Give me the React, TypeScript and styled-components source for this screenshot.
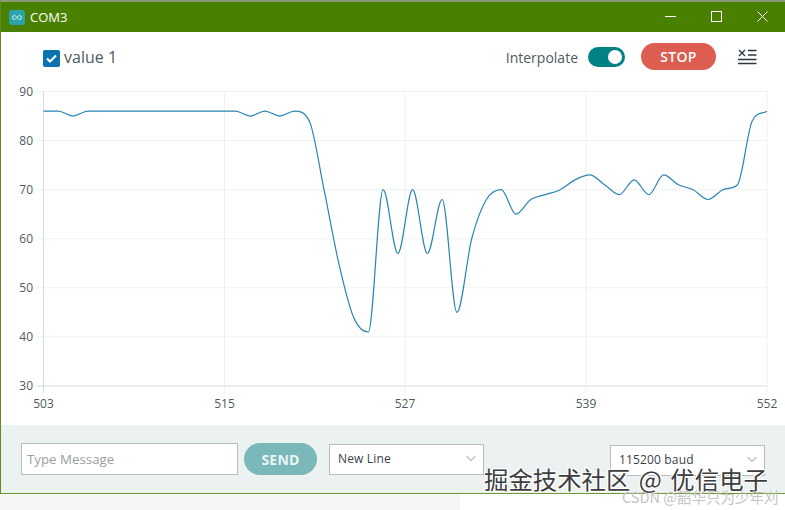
import { createGlobalStyle, styled } from "styled-components";

const GlobalStyle = createGlobalStyle`
    html, body {
        margin: 0;
        padding: 0;
        background: #fff;
    }
    body {
        font-family: "Open Sans", "Liberation Sans", sans-serif;
    }
`;

const Page = styled.div`
    position: relative;
    width: 785px;
    height: 510px;
    overflow: hidden;
    display: flex;
    flex-direction: column;
`;

const Window = styled.div`
    height: 494px;
    box-sizing: border-box;
    border-top: 2px solid #8d9a78;
    border-left: 1px solid #5c8c1c;
    border-bottom: 1px solid #6a9a2a;
    display: flex;
    flex-direction: column;
`;

const TitleBar = styled.div`
    height: 30px;
    flex-shrink: 0;
    background: #4a8000;
    display: flex;
    align-items: center;
    color: #fff;
    padding-left: 8px;
`;

const TitleText = styled.span`
    font-size: 13px;
    margin-left: 5px;
    flex: 1;
`;

const WinButton = styled.div`
    width: 46px;
    height: 28px;
    margin-bottom: 2px;
    display: flex;
    align-items: center;
    justify-content: center;
`;

const Toolbar = styled.div`
    height: 50px;
    flex-shrink: 0;
    background: #fff;
    display: flex;
    align-items: center;
    padding: 0 28px 0 42px;
`;

const CheckBox = styled.div`
    width: 17px;
    height: 17px;
    border-radius: 2px;
    background: #0a73b0;
    display: flex;
    align-items: center;
    justify-content: center;
    margin-top: 3px;
`;

const SeriesLabel = styled.span`
    font-size: 16px;
    color: #4e5b61;
    margin-left: 4px;
    flex: 1;
`;

const InterpolateLabel = styled.span`
    font-size: 14px;
    color: #4e5b61;
    margin-right: 10px;
`;

const Toggle = styled.div`
    position: relative;
    width: 37px;
    height: 20px;
    border-radius: 10px;
    background: #008184;
    margin-right: 16px;
    &::after {
        content: "";
        position: absolute;
        right: 3px;
        top: 3px;
        width: 14px;
        height: 14px;
        border-radius: 50%;
        background: #fff;
    }
`;

const StopButton = styled.button`
    width: 75px;
    height: 27px;
    border: none;
    padding: 0;
    border-radius: 14px;
    background: #dd5d50;
    color: #fff;
    font-family: inherit;
    font-weight: 600;
    font-size: 14px;
    letter-spacing: 0.3px;
    margin-right: 22px;
    margin-bottom: 2px;
`;

const ChartSvg = styled.svg`
    display: block;
    flex-shrink: 0;
    background: #fff;
`;

const AxisText = styled.text`
    font-size: 12px;
    fill: #4e5b61;
    font-family: "Open Sans", sans-serif;
`;

const Footer = styled.div`
    flex: 1;
    background: #ecf1f1;
    display: flex;
    align-items: center;
    padding: 0 20px 0 20px;
`;

const MessageInput = styled.input`
    width: 217px;
    height: 32px;
    box-sizing: border-box;
    border: 1px solid #b9bdbd;
    background: #fff;
    padding: 0 5px;
    font-family: inherit;
    font-size: 13.3px;
    &::placeholder {
        color: #9a9f9f;
        opacity: 1;
    }
`;

const SendButton = styled.button`
    width: 73px;
    height: 32px;
    margin-left: 6px;
    border: none;
    padding: 0;
    border-radius: 16px;
    background: #7ab8b9;
    color: #ecf5f5;
    font-family: inherit;
    font-weight: 700;
    font-size: 14px;
    letter-spacing: 0.2px;
`;

const Select = styled.div<{ $push?: boolean; $drop?: number }>`
    width: 155px;
    height: 31px;
    box-sizing: border-box;
    border: 1px solid #b9bdbd;
    background: #fff;
    display: flex;
    align-items: center;
    justify-content: space-between;
    padding: 0 7px 2px 8px;
    font-size: 12px;
    letter-spacing: 0.15px;
    color: #37424a;
    margin-left: ${(props) => (props.$push ? "auto" : "12px")};
    margin-top: ${(props) => props.$drop ?? 0}px;
`;

const Below = styled.div`
    flex: 1;
    display: flex;
`;

const BelowGrey = styled.div`
    width: 460px;
    background: #f5f6f5;
`;

const Watermark = styled.div`
    position: absolute;
    left: 484px;
    top: 463px;
    font-family: "Noto Sans CJK SC", sans-serif;
    font-size: 24.4px;
    word-spacing: 3px;
    line-height: 32px;
    color: #3d3d3d;
    white-space: nowrap;
    text-shadow: 1px 1px 0 #fff, -1px -1px 0 #fff, 1px -1px 0 #fff, -1px 1px 0 #fff;
`;

const Credit = styled.div`
    position: absolute;
    left: 622px;
    top: 488px;
    font-family: "Noto Sans CJK SC", sans-serif;
    font-size: 14.5px;
    line-height: 18px;
    color: #c4c4c4;
    white-space: nowrap;
`;

const values = [
    86, 86, 85, 86, 86, 86, 86, 86, 86, 86, 86, 86, 86, 86, 85, 86, 85, 86, 84, 70, 55, 44, 41, 70, 57, 70, 57, 68, 45,
    60, 68, 70, 65, 68, 69, 70, 72, 73, 71, 69, 72, 69, 73, 71, 70, 68, 70, 71, 84, 86,
];

const xAt = (i: number) => 43.5 + (i * 723.5) / 49;
const yAt = (v: number) => 91.5 + ((90 - v) * 294.5) / 60;

// monotone cubic, same idea as the chart lib's interpolation
function buildPath(data: number[]) {
    const pts = data.map((v, i) => [xAt(i), yAt(v)]);
    const slopes = pts.slice(1).map((p, i) => (p[1] - pts[i][1]) / (p[0] - pts[i][0]));
    const tangents = pts.map((_, i) => {
        if (i === 0) return slopes[0];
        if (i === pts.length - 1) return slopes[i - 1];
        const a = slopes[i - 1];
        const b = slopes[i];
        if (a * b <= 0) return 0;
        const limit = 3 * Math.min(Math.abs(a), Math.abs(b));
        return Math.sign(a) * Math.min(Math.abs(a + b) / 2, limit);
    });
    let d = `M${pts[0][0]} ${pts[0][1]}`;
    for (let i = 1; i < pts.length; i++) {
        const h = (pts[i][0] - pts[i - 1][0]) / 3;
        const c1y = pts[i - 1][1] + tangents[i - 1] * h;
        const c2y = pts[i][1] - tangents[i] * h;
        d += ` C${pts[i - 1][0] + h} ${c1y} ${pts[i][0] - h} ${c2y} ${pts[i][0]} ${pts[i][1]}`;
    }
    return d;
}

const yTicks = [90, 80, 70, 60, 50, 40, 30];
const xTicks = [
    { label: "503", x: 43.5 },
    { label: "515", x: 224.5 },
    { label: "527", x: 405 },
    { label: "539", x: 586 },
    { label: "552", x: 767 },
];

function Chart() {
    return (
        <ChartSvg width={784} height={343} viewBox="1 82 784 343">
            {yTicks.map((t) => (
                <g key={t}>
                    <line x1={36} x2={767} y1={yAt(t)} y2={yAt(t)} stroke={t === 30 ? "#d8dcdc" : "#eef1f2"} />
                    <AxisText x={33} y={yAt(t) + 4} textAnchor="end">
                        {t}
                    </AxisText>
                </g>
            ))}
            {xTicks.map((t) => (
                <g key={t.label}>
                    <line
                        x1={t.x}
                        x2={t.x}
                        y1={91.5}
                        y2={393}
                        stroke={t.x === 43.5 ? "#d8dcdc" : "#eef1f2"}
                    />
                    <AxisText x={t.x} y={408} textAnchor="middle">
                        {t.label}
                    </AxisText>
                </g>
            ))}
            <path d={buildPath(values)} fill="none" stroke="#2a85b4" strokeWidth={1.2} />
        </ChartSvg>
    );
}

function Chevron() {
    return (
        <svg width="10" height="7" viewBox="0 0 10 7">
            <path d="M.5 1L5 5.500 9.500 1" fill="none" stroke="#bcc1c1" strokeWidth="1.3" />
        </svg>
    );
}

function App() {
    return (
        <Page>
            <GlobalStyle />
            <Window>
                <TitleBar>
                    <svg width="16" height="15" viewBox="0 0 16 15">
                        <rect width="16" height="15" rx="3" fill="#2aa3ad" />
                        <path
                            d="M8 7.500c-1-1.500-2-1.800-2.800-1.800a1.800 1.800 0 0 0 0 3.600c.8 0 1.800-.3 2.800-1.800zm0 0c1-1.500 2-1.800 2.800-1.800a1.800 1.800 0 0 1 0 3.600c-.8 0-1.800-.3-2.800-1.800z"
                            fill="none"
                            stroke="#d8f3f3"
                            strokeWidth="1"
                        />
                    </svg>
                    <TitleText>COM3</TitleText>
                    <WinButton>
                        <svg width="11" height="11" viewBox="0 0 11 11">
                            <path d="M0 5.500h11" stroke="#fff" strokeWidth="1" />
                        </svg>
                    </WinButton>
                    <WinButton>
                        <svg width="11" height="11" viewBox="0 0 11 11">
                            <rect x=".5" y=".5" width="10" height="10" fill="none" stroke="#fff" />
                        </svg>
                    </WinButton>
                    <WinButton>
                        <svg width="11" height="11" viewBox="0 0 11 11">
                            <path d="M.5.500l10 10M10.500.500l-10 10" stroke="#fff" strokeWidth="1" />
                        </svg>
                    </WinButton>
                </TitleBar>
                <Toolbar>
                    <CheckBox>
                        <svg width="11" height="9" viewBox="0 0 11 9">
                            <path d="M1 4.500l3 3L10 1.500" fill="none" stroke="#fff" strokeWidth="2" />
                        </svg>
                    </CheckBox>
                    <SeriesLabel>value 1</SeriesLabel>
                    <InterpolateLabel>Interpolate</InterpolateLabel>
                    <Toggle />
                    <StopButton>STOP</StopButton>
                    <svg width="19" height="17" viewBox="0 0 19 17">
                        <path
                            d="M1 1l6 6M7 1L1 7M10 1.500h8.500M10 6h8.500M0 10.500h18.500M0 14.500h18.500"
                            fill="none"
                            stroke="#2b3a42"
                            strokeWidth="1.300"
                        />
                    </svg>
                </Toolbar>
                <Chart />
                <Footer>
                    <MessageInput placeholder="Type Message" />
                    <SendButton>SEND</SendButton>
                    <Select>
                        New Line
                        <Chevron />
                    </Select>
                    <Select $push $drop={2}>
                        115200 baud
                        <Chevron />
                    </Select>
                </Footer>
            </Window>
            <Below>
                <BelowGrey />
            </Below>
            <Watermark>掘金技术社区 @ 优信电子</Watermark>
            <Credit>CSDN @韶华只为少年刈</Credit>
        </Page>
    );
}

export default App;
